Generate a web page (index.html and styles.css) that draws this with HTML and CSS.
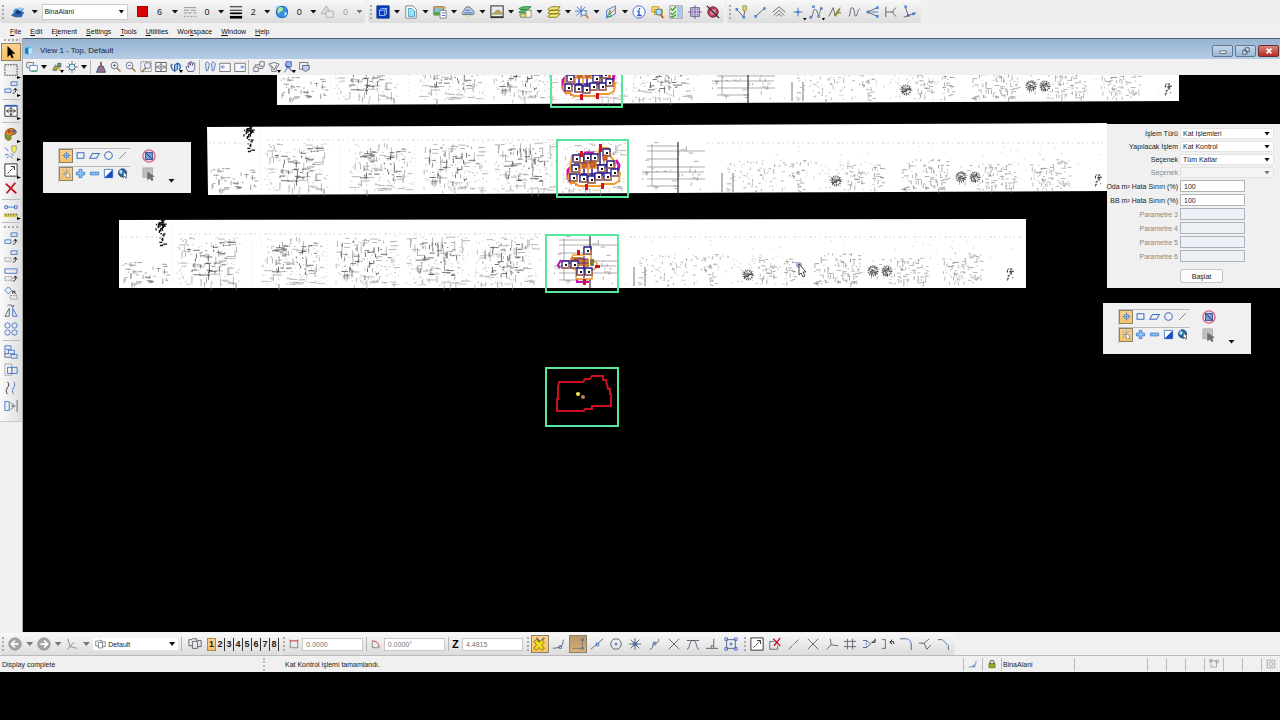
FILE: index.html
```
<!DOCTYPE html>
<html lang="tr">
<head>
    <meta charset="UTF-8">
    <title>View 1 - Top, Default</title>
    <link rel="stylesheet" href="styles.css">
</head>
<body>
    <!-- icon sprite -->
    <svg class="sprite" xmlns="http://www.w3.org/2000/svg">
        <symbol id="layers" viewBox="0 0 16 16"><path d="M0 12l4-4h11l-3 6H5z" fill="#2a62b0"/><path d="M2 7l3-3h10l-3 5H4z" fill="#4a94dc"/><path d="M5 9c0-4 6-5 7-1l-2 2H6z" fill="#163c70"/><path d="M7 4l4-2 3 3-4 2z" fill="#8fd0f0"/></symbol>
        <symbol id="linestyle" viewBox="0 0 16 16"><path class="g" d="M1 3h14M1 6h6m2 0h6M1 9h4m1 0h4m2 0h3M1 13h2m2 0h2m2 0h2m2 0h2"/></symbol>
        <symbol id="weight" viewBox="0 0 16 16"><path d="M1 2h14M1 6h14" stroke="#000"/><path d="M1 9.5h14" stroke="#000" stroke-width="2"/><path d="M1 14h14" stroke="#000" stroke-width="3"/></symbol>
        <symbol id="globe" viewBox="0 0 16 16"><path d="M1 1h13v14H1z" fill="#a9d3f6"/><circle cx="8" cy="8" r="6.5" fill="#3a8fe0" stroke="#1858a8"/><path d="M4 3c3-2 6 0 5 3-2 2-4 1-4 4C3 9 2 6 4 3z" fill="#a8e8a0"/><path d="M11 8l3 1-3 4z" fill="#e0f0ff"/></symbol>
        <symbol id="priority" viewBox="0 0 16 16"><path d="M6 1l6 9H0z" fill="#ddd" stroke="#aaa"/><path d="M6 7h8v7H6z" fill="#e8e8e8" stroke="#aaa"/></symbol>
        <symbol id="cube" viewBox="0 0 16 16"><path d="M1 1h14v14H1z" fill="#0d3db8" stroke="#0a2c88"/><path d="M4 6h6v6H4zM4 6l2-2h6v6l-2 2M10 6l2-2" stroke="#a8ccff"/></symbol>
        <symbol id="doc" viewBox="0 0 16 16"><path d="M2 1h8l4 4v10H2z" fill="#fff" stroke="#777"/><path d="M5 4h4l3 3v6H5z" fill="#9be4f4" stroke="#3a9ab8"/></symbol>
        <symbol id="picture" viewBox="0 0 16 16"><path d="M1 2h11v9H1z" fill="#7dc8e8" stroke="#557"/><path d="M1 8h6v4H1z" fill="#58a048"/><path d="M8 6h7v9H8z" fill="#fff" stroke="#777"/><path d="M1 2h14v2H1z" fill="#d8a050"/><path d="M10 9h4m-4 3h4" class="b"/></symbol>
        <symbol id="cloud" viewBox="0 0 16 16"><path d="M2 11c-2-2 1-4 2-6 1-4 7-4 8 0 3 1 4 4 2 6z" fill="#b8cbe0" stroke="#567"/><path d="M5 6h5m-6 3h9" class="b"/><path d="M4 12h8l-2 2H6z" fill="#d8e0a8"/></symbol>
        <symbol id="terrain" viewBox="0 0 16 16"><path d="M1 1h14v13H1z" fill="#e8f0f4" stroke="#555" stroke-width="1.500"/><path d="M2 9c4 0 4-4 7-4s3 3 5 4v2H2z" fill="#b0a860"/><path d="M1 14h14" stroke="#333" stroke-width="2"/></symbol>
        <symbol id="models" viewBox="0 0 16 16"><path d="M1 4l5-2h9l-4 3H2zM1 8l4-2h9l-4 3H2z" fill="#56c870" stroke="#287840"/><path d="M2 11l3-1h8l-4 4H3z" fill="#e8e060" stroke="#777"/><path d="M9 6h6v8H9z" fill="#fffbe0" stroke="#886"/></symbol>
        <symbol id="stack" viewBox="0 0 16 16"><path d="M1 13l4-3h10l-4 4H2zM1 9l4-3h10l-4 4H2zM1 5l4-3h10l-4 4H2z" fill="#f4ec70" stroke="#777018"/></symbol>
        <symbol id="burst" viewBox="0 0 16 16"><path class="b" d="M7 1v13M0 7h14M2 2l10 10M12 2L2 12"/><circle cx="10" cy="9" r="3" fill="#d8ecff" stroke="#57a"/><path d="M12 11l3 4" stroke="#d08038" stroke-width="2"/></symbol>
        <symbol id="plane" viewBox="0 0 16 16"><path class="b" d="M3 6l10-5v9L3 15z"/><path d="M4 13l3-7v6M3 13h6" stroke="#2c9a48"/><path d="M6 11l7-7" stroke="#cc4050"/></symbol>
        <symbol id="info" viewBox="0 0 16 16"><circle cx="8" cy="8" r="7" fill="#f4f8ff" stroke="#4268c8"/><path d="M8.500 3.500v2M6 7h2v5m-2 0h5" stroke="#2850c0" stroke-width="1.500"/></symbol>
        <symbol id="search" viewBox="0 0 16 16"><path d="M1 2h8v6H1zM4 5h9v6H4z" fill="#ffe070" stroke="#c09020"/><circle cx="9" cy="8" r="3.500" fill="#b0e0f8" stroke="#3870b0"/><path d="M11 11l3 4" stroke="#c05818" stroke-width="2"/></symbol>
        <symbol id="checks" viewBox="0 0 16 16"><path d="M1 1h14v14H1z" fill="#f0f4e0" stroke="#889"/><path d="M9 2h5v12H9z" fill="#a0c8f0"/><path d="M2 4l2 2 4-4M2 9l2 2 4-4M2 13l2 1 4-3" stroke="#3a9a30" stroke-width="1.500"/></symbol>
        <symbol id="crossgrid" viewBox="0 0 16 16"><path d="M3 3h10v10H3z" fill="#e0d8f0" stroke="#557"/><path d="M8 0v16M0 8h16" stroke="#8040a0"/><path d="M3 5h10M3 11h10M5 3v10M11 3v10" stroke="#99b"/></symbol>
        <symbol id="blocked" viewBox="0 0 16 16"><circle cx="8" cy="8" r="6" fill="#b84060" stroke="#702038"/><path d="M5 5h6v6H5z" fill="#d890a0"/><path d="M1 1l14 14" stroke="#222" stroke-width="1.500"/></symbol>
        <symbol id="smartline" viewBox="0 0 16 16"><path class="k" d="M2 5l8 9 1-7"/><path class="b" d="M1 4h2v2H1zM9 13h2v2H9z"/><path d="M9 1h4v4l-1 2h-2L9 5z" fill="#e8e040" stroke="#886"/></symbol>
        <symbol id="line" viewBox="0 0 16 16"><path class="k" d="M3 13L13 4"/><path class="b" d="M2 12h2v2H2zM12 3h2v2h-2z"/></symbol>
        <symbol id="chevrons" viewBox="0 0 16 16"><path class="k" d="M1 8l7-6 7 6M2 12l6-6 6 6M5 13l3-3 3 3"/></symbol>
        <symbol id="point" viewBox="0 0 16 16"><path class="b" d="M8 3v10M3 8h10M7 7h2v2H7z"/></symbol>
        <symbol id="curve1" viewBox="0 0 16 16"><path class="k" d="M2 14c3 0 2-9 5-9s2 6 4 6 1-7 4-7"/><path class="b" d="M1 13h2v2H1zM4 1h2v2H4zM10 12h2v2h-2zM13 3h2v2h-2z"/></symbol>
        <symbol id="curve2" viewBox="0 0 16 16"><path d="M8 13l5-8" stroke="#c8b818" stroke-width="3"/><path class="k" d="M1 13L6 3l2 9 6-9M11 9h4"/></symbol>
        <symbol id="curve3" viewBox="0 0 16 16"><path class="k" d="M2 13C4 13 3 3 6 3s2 10 4 10 2-10 5-8"/></symbol>
        <symbol id="split" viewBox="0 0 16 16"><path class="k" d="M2 8l11-5M2 8l11 5"/><path class="b" d="M1 7h3v2H1zM12 2h2v2h-2zM12 12h2v2h-2zM6 8h8"/></symbol>
        <symbol id="trimline" viewBox="0 0 16 16"><path class="k" d="M2 2v12M2 8h8M14 3c-5 3-5 7 0 10"/></symbol>
        <symbol id="angle" viewBox="0 0 16 16"><path class="k" d="M3 3l3 9 9-3M1 14l5-2"/><path class="b" d="M2 1h2v2H2zM5 11h2v2H5zM11 9h2v2h-2z"/></symbol>
        <symbol id="view" viewBox="0 0 16 16"><path d="M2 3l6-2 6 2v10l-6 2-6-2z" fill="#49b8ee"/><path d="M2 3l6 2v10l-6-2z" fill="#1c78c8"/><path d="M8 5l6-2v10l-6 2z" fill="#bfe6fa"/></symbol>
        <symbol id="windows" viewBox="0 0 16 16"><path class="k" d="M1 2h9v7H1z"/><path d="M5 6h10v7H5z" fill="#fff" class="b"/><path d="M7 14h8" stroke="#38a048"/></symbol>
        <symbol id="attrs" viewBox="0 0 16 16"><path d="M2 12l4-7 3 4-2 4z" fill="#a0a848" stroke="#667"/><path d="M9 3h4v5H9z" fill="#68a868" stroke="#456"/><circle cx="11" cy="11" r="2" fill="#ddc870"/></symbol>
        <symbol id="sun" viewBox="0 0 16 16"><path class="k" d="M8 0v16M0 8h16M3 3l10 10M13 3L3 13"/><circle cx="8" cy="8" r="4" fill="#d4f4f8" stroke="#357"/></symbol>
        <symbol id="broom" viewBox="0 0 16 16"><path d="M7 1h2v6H7z" fill="#a03030"/><path d="M5 7h6l3 8H2z" fill="#7088b8" stroke="#334"/><path d="M7 9v5m3-5v5" stroke="#c04848"/></symbol>
        <symbol id="zoomin" viewBox="0 0 16 16"><circle cx="6" cy="6" r="4.500" fill="#eef" stroke="#556"/><path d="M9 9l5 5" stroke="#a87848" stroke-width="2"/><path class="k" d="M6 4v4M4 6h4"/></symbol>
        <symbol id="zoomout" viewBox="0 0 16 16"><circle cx="6" cy="6" r="4.500" fill="#eef" stroke="#556"/><path d="M9 9l5 5" stroke="#a87848" stroke-width="2"/><path class="k" d="M4 6h4"/></symbol>
        <symbol id="zoomarea" viewBox="0 0 16 16"><path class="k" stroke-dasharray="2 1" d="M1 1h14v13H1z"/><circle cx="10" cy="6" r="4" fill="#eef" stroke="#556"/><path d="M8 9l-6 6" stroke="#a87848" stroke-width="2"/></symbol>
        <symbol id="fit" viewBox="0 0 16 16"><path d="M1 2h14v12H1z" fill="#fff" stroke="#333"/><path class="k" d="M8 4v8M3 8h10M6 6l2-3 2 3M6 10l2 3 2-3M5 6L2 8l3 2M11 6l3 2-3 2"/></symbol>
        <symbol id="rotate" viewBox="0 0 16 16"><path d="M3 4C0 8 3 13 7 13M3 4L1 7M9 3c5 0 6 6 3 9" stroke="#2878c8" stroke-width="2"/><path d="M6 5l4-2v8l-4 3z" fill="#80c0f0" stroke="#236"/></symbol>
        <symbol id="hand" viewBox="0 0 16 16"><path d="M4 14L1 8l2-1 2 2-1-6 2-1 1 4V1h2l1 5 1-4 2 1v7l-2 4z" fill="#eef0ff" stroke="#446"/></symbol>
        <symbol id="walk" viewBox="0 0 16 16"><path d="M2 3c2-3 5-1 5 2L5 13H3zM10 3c2-3 5-1 5 2l-2 8h-2z" fill="#dce8ff" stroke="#3858a8"/></symbol>
        <symbol id="prev" viewBox="0 0 16 16"><path d="M1 3h14v11H1z" fill="#f8f8ff" stroke="#555"/><path class="b" d="M3 8h5M3 8l3-2M3 8l3 2"/></symbol>
        <symbol id="next" viewBox="0 0 16 16"><path d="M1 3h14v11H1z" fill="#f8f8ff" stroke="#555"/><path class="b" d="M8 8h5l-3-2m3 2l-3 2"/></symbol>
        <symbol id="copyview" viewBox="0 0 16 16"><path class="k" d="M9 1h6v6H9zM1 8h6v6H1zM8 10h5V8M3 8V5h6"/></symbol>
        <symbol id="clip" viewBox="0 0 16 16"><path class="k" d="M1 4l7-2 7 2-4 6v4H5v-4zM4 5l4 7 4-7"/></symbol>
        <symbol id="clipmask" viewBox="0 0 16 16"><path d="M4 1h7v7H4z" fill="#9eb8f0" stroke="#24489c"/><path d="M2 15l5-8 2 4 5 4M2 4l11 10" stroke="#24489c"/></symbol>
        <symbol id="display" viewBox="0 0 16 16"><path class="k" d="M2 2h11v9H2z"/><path d="M6 6h9v5l-5 3-4-3z" fill="#c6cde8" stroke="#446"/></symbol>
        <symbol id="arrow" viewBox="0 0 16 16"><path d="M4 1v13l3-3 2 4 2-1-2-4h4z" fill="#000"/></symbol>
        <symbol id="fence" viewBox="0 0 16 16"><path stroke="#333" stroke-dasharray="2 1" d="M1 2h14v12H1z"/></symbol>
        <symbol id="manip" viewBox="0 0 16 16"><path class="b" d="M8 1h7v4H8zM1 9h7v4H1z"/><path d="M10 14c3 0 4-2 3-5m-2 2l2-3 2 3" stroke="#222"/></symbol>
        <symbol id="fitbox" viewBox="0 0 16 16"><path d="M1 2h14v12H1z" fill="#fff" stroke="#222"/><path d="M1 2h14" stroke="#2868b8" stroke-width="2"/><path d="M8 4v9M3 8h10M6 6l2-2 2 2M6 11l2 2 2-2M5 6L3 8l2 2M11 6l2 2-2 2" stroke="#222"/></symbol>
        <symbol id="palette" viewBox="0 0 16 16"><path d="M3 4c4-4 11-2 11 2 0 3-5 2-6 4s2 5-3 5C1 15 0 8 3 4z" fill="#d88420" stroke="#704010"/><circle cx="6" cy="5" r="1.500" fill="#c03020"/><circle cx="11" cy="5" r="1.500" fill="#3060c0"/><path d="M2 9h5v5H3z" fill="#5aa838"/></symbol>
        <symbol id="tips" viewBox="0 0 16 16"><path class="b" d="M1 3l4 4M7 13l3 2M1 11h4M8 10l3 2M3 15l3-3"/><path d="M9 1h5v5l-2 3h-1L9 6z" fill="#f8ec60" stroke="#997"/></symbol>
        <symbol id="scale" viewBox="0 0 16 16"><path d="M1 1h14v14H1z" fill="#fff" stroke="#222"/><path stroke="#222" stroke-dasharray="3 1" d="M4 12l7-7"/><path d="M8 4h4v4" stroke="#222"/></symbol>
        <symbol id="delete" viewBox="0 0 16 16"><path d="M2 3l12 11M13 2L3 14" stroke="#c41020" stroke-width="2"/></symbol>
        <symbol id="measure" viewBox="0 0 16 16"><path class="b" d="M1 2h3v3H1zM12 2h3v3h-3zM4 3.500h8"/><path d="M0 11h16v4H0z" fill="#d4cc50"/><path d="M2 11v2m3-2v2m3-2v2m3-2v2m3-2v2" stroke="#555"/></symbol>
        <symbol id="move" viewBox="0 0 16 16"><path class="b" d="M8 1h7v4H8z"/><path class="g" stroke-dasharray="2 1" d="M1 9h7v4H1z"/><path d="M10 14c3 0 4-2 3-5m-2 2l2-3 2 3" stroke="#222"/></symbol>
        <symbol id="scale2" viewBox="0 0 16 16"><path class="b" d="M1 1h14v5H1z"/><path class="g" stroke-dasharray="2 1" d="M1 10h8v4H1z"/><path d="M10 15c3 0 4-2 3-5m-2 2l2-3 2 3" stroke="#222"/></symbol>
        <symbol id="rotate2" viewBox="0 0 16 16"><path class="b" d="M1 5l4-4 4 4-4 4z"/><path class="g" stroke-dasharray="2 1" d="M7 11h8v4H7z"/><path d="M14 9l-4-3M10 9V6h3" stroke="#222"/></symbol>
        <symbol id="mirror" viewBox="0 0 16 16"><path class="k" d="M6 5v9H1zM4 2c3-2 5-1 6 1m-2 0h3V1"/><path class="b" d="M10 5v9h5z"/></symbol>
        <symbol id="array" viewBox="0 0 16 16"><g class="b"><circle cx="4" cy="4" r="3"/><circle cx="12" cy="4" r="3"/><circle cx="4" cy="12" r="3"/><circle cx="12" cy="12" r="3"/></g></symbol>
        <symbol id="align" viewBox="0 0 16 16"><path class="b" d="M1 1h7v4H1zM5 6h7v4H5zM8 11h7v4H8z"/><path class="k" d="M1 6v8M1 10h4M1 14h6"/></symbol>
        <symbol id="stretch" viewBox="0 0 16 16"><path class="g" stroke-dasharray="2 1" d="M1 1h8v13H1z"/><path class="b" d="M4 5h11v7H4zM9 5v7"/></symbol>
        <symbol id="waves" viewBox="0 0 16 16"><path d="M4 1c5 5-5 8 0 14" stroke="#222"/><path class="b" d="M11 1c5 5-5 8 0 14"/></symbol>
        <symbol id="mirror2" viewBox="0 0 16 16"><path class="b" d="M1 3h5v10H1z"/><path class="k" d="M15 1v14M8 4l4 4-4 4M8 8h5"/></symbol>
        <symbol id="target" viewBox="0 0 16 16"><path d="M8 2v12M2 8h12" stroke="#4878c0"/><circle cx="8" cy="8" r="3.500" fill="#a8ccf0" stroke="#3868b0"/><path d="M7 7h2v2H7z" fill="#1848a0"/></symbol>
        <symbol id="block" viewBox="0 0 16 16"><path class="b thick" d="M3 4h10v8H3z"/></symbol>
        <symbol id="shape" viewBox="0 0 16 16"><path class="b thick" d="M5 5h10l-4 7H1z"/></symbol>
        <symbol id="circle" viewBox="0 0 16 16"><circle class="b thick" cx="8" cy="8" r="5.500"/></symbol>
        <symbol id="diag" viewBox="0 0 16 16"><path class="k" d="M3 13L13 3"/></symbol>
        <symbol id="wand" viewBox="0 0 16 16"><path d="M2 2l12 12M8 1v5M1 8h5M13 2L9 6M2 13l5-5" stroke="#8090a0"/><path d="M7 7l5 2v5H8z" fill="#fff" stroke="#778"/></symbol>
        <symbol id="plus" viewBox="0 0 16 16"><path d="M6 2h4v4h4v4h-4v4H6v-4H2V6h4z" fill="#8cc4f4" stroke="#1f68c8"/></symbol>
        <symbol id="minus" viewBox="0 0 16 16"><path d="M2 6h12v4H2z" fill="#8cc4f4" stroke="#1f68c8"/></symbol>
        <symbol id="invert" viewBox="0 0 16 16"><path d="M2 2h12v12H2z" fill="#fff" stroke="#1450a8"/><path d="M14 2v12H2z" fill="#1450c0"/></symbol>
        <symbol id="world" viewBox="0 0 16 16"><circle cx="8" cy="7" r="6" fill="#2868a8" stroke="#184068"/><path d="M5 2l4 3-3 4-3-3z" fill="#a8e0f0"/><path d="M9 5v9l2-2 2 3 1-5z" fill="#fff" stroke="#234"/></symbol>
        <symbol id="noselect" viewBox="0 0 16 16"><circle cx="8" cy="8" r="7" fill="#e4e0f0" stroke="#dc6878" stroke-width="1.500"/><path d="M4 4h8v8H4z" fill="#7898d0" stroke="#34509c"/><path d="M4 4l8 8" stroke="#24386c"/></symbol>
        <symbol id="pick" viewBox="0 0 16 16"><path d="M1 1h11v11H1z" fill="#c0c0c0" stroke="#aaa"/><path d="M6 5v10l3-2 2 3 2-1-1-4h3z" fill="#707070"/></symbol>
        <symbol id="back" viewBox="0 0 16 16"><circle cx="8" cy="8" r="7" fill="#a4a4a4" stroke="#888"/><path d="M12 8H5m3-4L4 8l4 4" stroke="#fff" stroke-width="2"/></symbol>
        <symbol id="forward" viewBox="0 0 16 16"><circle cx="8" cy="8" r="7" fill="#a4a4a4" stroke="#888"/><path d="M4 8h7M8 4l4 4-4 4" stroke="#fff" stroke-width="2"/></symbol>
        <symbol id="acs" viewBox="0 0 16 16"><path class="g" d="M3 2l3 9 8 2M6 11l-4 3M6 11l4-5"/></symbol>
        <symbol id="viewgroup" viewBox="0 0 16 16"><path class="k" d="M5 3H1v7h4M5 2h5v3M5 5h6v8H5zM11 4h4v7h-4"/></symbol>
        <symbol id="distance" viewBox="0 0 16 16"><path class="k" d="M2 5v9h12V5"/><path d="M2 3h12M2 1v4m12-4v4" stroke="#c03030" stroke-width="1.500"/></symbol>
        <symbol id="degree" viewBox="0 0 16 16"><path class="k" d="M2 3v11h12"/><path d="M2 3c7 0 10 4 11 10" stroke="#c03030" stroke-width="1.500"/></symbol>
        <symbol id="snapoff" viewBox="0 0 16 16"><path d="M8 6l5-5M8 6L4 1" stroke="#777" stroke-width="2"/><path d="M1 5l3-2 3 3 3-3 3 3-3 3 3 4-3 2-3-3-3 3-3-2 3-4z" fill="#f0dc18" stroke="#806c10"/></symbol>
        <symbol id="snapnear" viewBox="0 0 16 16"><path class="k" d="M1 13l7-1 4-3 1-6"/><path class="b" d="M8 10h3v3H8z"/></symbol>
        <symbol id="snapkey" viewBox="0 0 16 16"><path class="k" stroke-dasharray="2 1" d="M2 13h11V3"/><path class="b" d="M12 2h2v2h-2zM12 12h2v2h-2z"/></symbol>
        <symbol id="snapmid" viewBox="0 0 16 16"><path class="k" d="M1 14L15 2"/><path class="b" d="M7 7h3v3H7z"/></symbol>
        <symbol id="snapcenter" viewBox="0 0 16 16"><circle class="k" cx="8" cy="8" r="6"/><path class="b" d="M7 7h2v2H7z"/></symbol>
        <symbol id="snaporigin" viewBox="0 0 16 16"><path class="k" d="M8 1v14M1 8h14M3 3l10 10M13 3L3 13"/><path class="b" d="M6 6h4v4H6z"/></symbol>
        <symbol id="snapbisect" viewBox="0 0 16 16"><path class="k" d="M2 14c6-1 1-6 6-7s4-2 4-5"/><path class="b" d="M6 6h3v3H6z"/></symbol>
        <symbol id="cross" viewBox="0 0 16 16"><path class="k" d="M2 2l12 12M14 2L2 14"/></symbol>
        <symbol id="snaptan" viewBox="0 0 16 16"><path class="k" d="M1 4h14M1 14c4 0 2-10 7-10s3 10 7 10"/></symbol>
        <symbol id="snapperp" viewBox="0 0 16 16"><path class="k" d="M1 13h14M10 13V2M7 13v-3h3"/></symbol>
        <symbol id="snapbox" viewBox="0 0 16 16"><path class="k" d="M3 3h10v10H3z"/><path class="b" d="M1 1h3v3H1zM12 1h3v3h-3zM1 12h3v3H1zM12 12h3v3h-3zM7 7h2v2H7z"/></symbol>
        <symbol id="delpart" viewBox="0 0 16 16"><path class="k" d="M7 5H2v9h9v-4"/><path d="M6 2l8 8M14 1L7 10" stroke="#c41020" stroke-width="1.500"/></symbol>
        <symbol id="extend" viewBox="0 0 16 16"><path class="k" stroke-dasharray="6 1 1 1" d="M2 14L14 2"/></symbol>
        <symbol id="extend2" viewBox="0 0 16 16"><path class="k" d="M2 14l5-5L6 2M7 9l8 1"/></symbol>
        <symbol id="hash" viewBox="0 0 16 16"><path class="k" d="M5 2v12M11 2v12M1 5h14M1 11h14"/></symbol>
        <symbol id="trim" viewBox="0 0 16 16"><path class="k" d="M1 4h4l5 4-5 4H1"/><path class="b" stroke-dasharray="2 1" d="M5 4v8"/><path d="M15 2v4h-4m4-3l-4 4" stroke="#222"/></symbol>
        <symbol id="trim2" viewBox="0 0 16 16"><path class="k" d="M1 3h4v10H1"/><path d="M10 6l4-1 1 3M10 6l3-3M10 6l3 2" stroke="#222"/></symbol>
        <symbol id="fillet" viewBox="0 0 16 16"><path class="k" d="M1 2h6M14 8v7"/><path class="b" d="M7 2c4 0 7 2 7 7"/></symbol>
        <symbol id="chamfer" viewBox="0 0 16 16"><path class="k" d="M1 7h6l6-5M7 7l3 7M10 14l5-5"/></symbol>
        <symbol id="chamfer2" viewBox="0 0 16 16"><path class="k" d="M1 3h5M13 10v5"/><path class="b" d="M6 3l7 7"/></symbol>
        <symbol id="lock" viewBox="0 0 16 16"><path d="M5 8V5c0-4 6-4 6 0v3" stroke="#777" stroke-width="2"/><path d="M3 7h10v7H3z" fill="#98a820" stroke="#5c6810"/></symbol>
        <symbol id="frame" viewBox="0 0 16 16"><path class="g" d="M3 3h9v10H3zM1 1h4v3H1zM11 2h4v4h-4z"/></symbol>
        <symbol id="at" viewBox="0 0 16 16"><path class="g" d="M2 2h12v12H2z"/><circle class="g" cx="8" cy="8" r="3"/></symbol>
    </svg>

    <header class="toolbars">
        <div class="bar attributes">
            <span class="grip"></span>
            <button class="tool" aria-label="Level"><svg><use href="#layers"/></svg></button>
            <span class="drop"></span>
            <span class="select level"><select aria-label="Active level"><option>BinaAlani</option></select></span>
            <button class="attr"><i class="swatch"></i><span>6</span><i class="drop"></i></button>
            <button class="attr"><svg><use href="#linestyle"/></svg><span>0</span><i class="drop"></i></button>
            <button class="attr"><svg><use href="#weight"/></svg><span>2</span><i class="drop"></i></button>
            <button class="attr"><svg><use href="#globe"/></svg><span>0</span><i class="drop"></i></button>
            <button class="attr" disabled><svg><use href="#priority"/></svg><span>0</span><i class="drop"></i></button>
        </div>
        <div class="bar primary">
            <span class="grip"></span>
            <button class="pair"><svg><use href="#cube"/></svg><i class="drop"></i></button>
            <button class="pair"><svg><use href="#doc"/></svg><i class="drop"></i></button>
            <button class="pair"><svg><use href="#picture"/></svg><i class="drop"></i></button>
            <button class="pair"><svg><use href="#cloud"/></svg><i class="drop"></i></button>
            <button class="pair"><svg><use href="#terrain"/></svg><i class="drop"></i></button>
            <button class="pair"><svg><use href="#models"/></svg><i class="drop"></i></button>
            <button class="pair"><svg><use href="#stack"/></svg><i class="drop"></i></button>
            <button class="pair"><svg><use href="#burst"/></svg><i class="drop"></i></button>
            <button class="pair"><svg><use href="#plane"/></svg><i class="drop"></i></button>
            <button class="tool"><svg><use href="#info"/></svg></button>
            <button class="tool"><svg><use href="#search"/></svg></button>
            <button class="tool"><svg><use href="#checks"/></svg></button>
            <button class="tool"><svg><use href="#crossgrid"/></svg></button>
            <button class="tool"><svg><use href="#blocked"/></svg></button>
        </div>
        <div class="bar linear">
            <span class="grip"></span>
            <button class="tool"><svg><use href="#smartline"/></svg></button>
            <button class="tool"><svg><use href="#line"/></svg></button>
            <button class="tool"><svg><use href="#chevrons"/></svg></button>
            <button class="tool more"><svg><use href="#point"/></svg></button>
            <button class="tool more"><svg><use href="#curve1"/></svg></button>
            <button class="tool"><svg><use href="#curve2"/></svg></button>
            <button class="tool"><svg><use href="#curve3"/></svg></button>
            <button class="tool"><svg><use href="#split"/></svg></button>
            <button class="tool"><svg><use href="#trimline"/></svg></button>
            <button class="tool"><svg><use href="#angle"/></svg></button>
        </div>
    </header>

    <nav class="menu">
        <a href="#"><u>F</u>ile</a>
        <a href="#"><u>E</u>dit</a>
        <a href="#">E<u>l</u>ement</a>
        <a href="#"><u>S</u>ettings</a>
        <a href="#"><u>T</u>ools</a>
        <a href="#"><u>U</u>tilities</a>
        <a href="#">Wor<u>k</u>space</a>
        <a href="#"><u>W</u>indow</a>
        <a href="#"><u>H</u>elp</a>
    </nav>

    <div class="workspace">
        <aside class="side">
            <div class="side-tools">
                <span class="grip-h"></span>
                <button class="active"><svg><use href="#arrow"/></svg></button>
                <button class="more"><svg><use href="#fence"/></svg></button>
                <button class="more"><svg><use href="#manip"/></svg></button>
                <hr>
                <button class="more"><svg><use href="#fitbox"/></svg></button>
                <hr>
                <button class="more"><svg><use href="#palette"/></svg></button>
                <button class="more"><svg><use href="#tips"/></svg></button>
                <button class="more"><svg><use href="#scale"/></svg></button>
                <button><svg><use href="#delete"/></svg></button>
                <hr>
                <button class="more"><svg><use href="#measure"/></svg></button>
                <hr>
                <span class="grip-h"></span>
                <button><svg><use href="#manip"/></svg></button>
                <button><svg><use href="#move"/></svg></button>
                <button><svg><use href="#scale2"/></svg></button>
                <button><svg><use href="#rotate2"/></svg></button>
                <button><svg><use href="#mirror"/></svg></button>
                <button><svg><use href="#array"/></svg></button>
                <hr>
                <button><svg><use href="#align"/></svg></button>
                <button><svg><use href="#stretch"/></svg></button>
                <button><svg><use href="#waves"/></svg></button>
                <button><svg><use href="#mirror2"/></svg></button>
            </div>
        </aside>

        <main class="view">
            <div class="title">
                <svg><use href="#view"/></svg>
                <h1>View 1 - Top, Default</h1>
                <div class="window-buttons">
                    <button aria-label="Minimize"><svg viewBox="0 0 16 10"><path d="M4 5h8v3H4z" fill="#fff" stroke="#456"/></svg></button>
                    <button aria-label="Restore"><svg viewBox="0 0 16 10"><path d="M7 1h5v5H7zM4 4h5v5H4z" fill="#d8e6f4" stroke="#345"/></svg></button>
                    <button class="close" aria-label="Close"><svg viewBox="0 0 16 10"><path d="M5 2l6 6M11 2L5 8" stroke="#fff" stroke-width="2"/></svg></button>
                </div>
            </div>
            <div class="view-tools">
                <button><svg><use href="#windows"/></svg></button>
                <i class="drop"></i>
                <button class="more"><svg><use href="#attrs"/></svg></button>
                <button><svg><use href="#sun"/></svg></button>
                <i class="drop"></i>
                <i class="sep"></i>
                <button><svg><use href="#broom"/></svg></button>
                <button><svg><use href="#zoomin"/></svg></button>
                <button><svg><use href="#zoomout"/></svg></button>
                <button><svg><use href="#zoomarea"/></svg></button>
                <button><svg><use href="#fit"/></svg></button>
                <button class="more"><svg><use href="#rotate"/></svg></button>
                <button><svg><use href="#hand"/></svg></button>
                <i class="sep"></i>
                <button><svg><use href="#walk"/></svg></button>
                <button><svg><use href="#prev"/></svg></button>
                <button><svg><use href="#next"/></svg></button>
                <i class="sep"></i>
                <button><svg><use href="#copyview"/></svg></button>
                <button class="more"><svg><use href="#clip"/></svg></button>
                <button class="more"><svg><use href="#clipmask"/></svg></button>
                <button><svg><use href="#display"/></svg></button>
            </div>

            <div class="canvas">
                <svg id="drawing"></svg>

                <section class="palette palette-left">
                    <div class="modes">
                        <button class="active"><svg><use href="#target"/></svg></button>
                        <button><svg><use href="#block"/></svg></button>
                        <button><svg><use href="#shape"/></svg></button>
                        <button><svg><use href="#circle"/></svg></button>
                        <button><svg><use href="#diag"/></svg></button>
                    </div>
                    <button class="big"><svg><use href="#noselect"/></svg></button>
                    <div class="modes">
                        <button class="active"><svg><use href="#wand"/></svg></button>
                        <button><svg><use href="#plus"/></svg></button>
                        <button><svg><use href="#minus"/></svg></button>
                        <button><svg><use href="#invert"/></svg></button>
                        <button><svg><use href="#world"/></svg></button>
                    </div>
                    <button class="big"><svg><use href="#pick"/></svg></button>
                    <i class="drop"></i>
                </section>

                <form class="dialog">
                    <label for="tur">İşlem Türü</label>
                    <span class="select"><select id="tur"><option>Kat İşlemleri</option></select></span>
                    <label for="islem">Yapılacak İşlem</label>
                    <span class="select"><select id="islem"><option>Kat Kontrol</option></select></span>
                    <label for="sec1">Seçenek</label>
                    <span class="select"><select id="sec1"><option>Tüm Katlar</option></select></span>
                    <label for="sec2" class="off">Seçenek</label>
                    <span class="select off"><select id="sec2" disabled></select></span>
                    <label for="oda">Oda m² Hata Sınırı (%)</label>
                    <input id="oda" value="100">
                    <label for="bb">BB m² Hata Sınırı (%)</label>
                    <input id="bb" value="100">
                    <label for="p3" class="off">Parametre 3</label>
                    <input id="p3" disabled>
                    <label for="p4" class="off">Parametre 4</label>
                    <input id="p4" disabled>
                    <label for="p5" class="off">Parametre 5</label>
                    <input id="p5" disabled>
                    <label for="p6" class="off">Parametre 6</label>
                    <input id="p6" disabled>
                    <button type="button">Başlat</button>
                </form>

                <section class="palette palette-right">
                    <div class="modes">
                        <button class="active"><svg><use href="#target"/></svg></button>
                        <button><svg><use href="#block"/></svg></button>
                        <button><svg><use href="#shape"/></svg></button>
                        <button><svg><use href="#circle"/></svg></button>
                        <button><svg><use href="#diag"/></svg></button>
                    </div>
                    <button class="big"><svg><use href="#noselect"/></svg></button>
                    <div class="modes">
                        <button class="active"><svg><use href="#wand"/></svg></button>
                        <button><svg><use href="#plus"/></svg></button>
                        <button><svg><use href="#minus"/></svg></button>
                        <button><svg><use href="#invert"/></svg></button>
                        <button><svg><use href="#world"/></svg></button>
                    </div>
                    <button class="big"><svg><use href="#pick"/></svg></button>
                    <i class="drop"></i>
                </section>
            </div>
        </main>
    </div>

    <footer>
        <div class="bottom">
            <div class="bar views">
                <span class="grip"></span>
                <button class="pair" disabled><svg><use href="#back"/></svg><i class="drop"></i></button>
                <button class="pair" disabled><svg><use href="#forward"/></svg><i class="drop"></i></button>
                <button class="pair" disabled><svg><use href="#acs"/></svg><i class="drop"></i></button>
                <span class="select group-select"><svg><use href="#viewgroup"/></svg><select aria-label="View group"><option>Default</option></select></span>
                <i class="sep"></i>
                <button class="tool"><svg><use href="#viewgroup"/></svg></button>
                <div class="numbers">
                    <button class="active">1</button><button>2</button><button>3</button><button>4</button><button>5</button><button>6</button><button>7</button><button>8</button>
                </div>
            </div>
            <div class="bar accudraw">
                <span class="grip"></span>
                <label for="dist" aria-label="Distance"><svg><use href="#distance"/></svg></label>
                <input id="dist" value="0.0000">
                <i class="sep"></i>
                <label for="deg" aria-label="Angle"><svg><use href="#degree"/></svg></label>
                <input id="deg" value="0.0000°">
                <i class="sep"></i>
                <label for="z">Z</label>
                <input id="z" value="4.4815">
            </div>
            <div class="bar snaps">
                <span class="grip"></span>
                <button class="tool active"><svg><use href="#snapoff"/></svg></button>
                <button class="tool"><svg><use href="#snapnear"/></svg></button>
                <button class="tool active dark"><svg><use href="#snapkey"/></svg></button>
                <button class="tool"><svg><use href="#snapmid"/></svg></button>
                <button class="tool"><svg><use href="#snapcenter"/></svg></button>
                <button class="tool"><svg><use href="#snaporigin"/></svg></button>
                <button class="tool"><svg><use href="#snapbisect"/></svg></button>
                <button class="tool"><svg><use href="#cross"/></svg></button>
                <button class="tool"><svg><use href="#snaptan"/></svg></button>
                <button class="tool"><svg><use href="#snapperp"/></svg></button>
                <button class="tool"><svg><use href="#snapbox"/></svg></button>
            </div>
            <div class="bar modify">
                <span class="grip"></span>
                <button class="tool"><svg><use href="#scale"/></svg></button>
                <button class="tool"><svg><use href="#delpart"/></svg></button>
                <button class="tool"><svg><use href="#extend"/></svg></button>
                <button class="tool"><svg><use href="#cross"/></svg></button>
                <button class="tool"><svg><use href="#extend2"/></svg></button>
                <button class="tool"><svg><use href="#hash"/></svg></button>
                <button class="tool"><svg><use href="#trim"/></svg></button>
                <button class="tool"><svg><use href="#trim2"/></svg></button>
                <button class="tool"><svg><use href="#fillet"/></svg></button>
                <button class="tool"><svg><use href="#chamfer"/></svg></button>
                <button class="tool"><svg><use href="#chamfer2"/></svg></button>
            </div>
        </div>
        <div class="status">
            <span class="state">Display complete</span>
            <span class="message">Kat Kontrol işlemi tamamlandı.</span>
            <span class="cell"><svg><use href="#snapnear"/></svg></span>
            <span class="cell"><svg><use href="#lock"/></svg></span>
            <span class="cell wide">BinaAlani</span>
            <span class="cell wide"></span>
            <span class="cell"></span>
            <span class="cell"></span>
            <span class="cell"></span>
            <span class="cell"><svg><use href="#frame"/></svg></span>
            <span class="cell"></span>
            <span class="cell"></span>
            <span class="cell"><svg><use href="#at"/></svg></span>
        </div>
    </footer>

    <script src="script.js"></script>
</body>
</html>
```
FILE: styles.css
```
* {
    margin: 0;
    padding: 0;
    box-sizing: border-box;
}

body {
    min-height: 100vh;
    display: flex;
    flex-direction: column;
    padding-bottom: 48px;
    background: #000;
    color: #222;
    font-family: 'Liberation Sans', Arial, sans-serif;
    font-size: 7px;
    overflow: hidden;
}

button,
input,
select {
    font: inherit;
    color: inherit;
    border: none;
    background: none;
    border-radius: 0;
}

svg {
    display: block;
    width: 14px;
    height: 14px;
    fill: none;
    flex: none;
}

.sprite {
    position: absolute;
    width: 0;
    height: 0;
}

.b { stroke: #3a70c8; }
.k { stroke: #555c68; }
.g { stroke: #888; }
.thick { stroke-width: 1.5; }

/* shared bits */
.drop {
    flex: none;
    width: 7px;
    height: 4px;
    background: #111;
    clip-path: polygon(0 0, 100% 0, 50% 100%);
}

:disabled .drop {
    background: #777;
}

.sep {
    flex: none;
    width: 1px;
    height: 14px;
    background: #b4b4b4;
}

.grip {
    flex: none;
    width: 3px;
    height: 14px;
    border-left: 2px dotted #aaa;
}

.select {
    position: relative;
    display: flex;
    align-items: center;
    background: #fff;
}

.select select {
    appearance: none;
    width: 100%;
    height: 100%;
    padding: 0 2px;
    outline: none;
}

.select::after {
    content: "";
    position: absolute;
    right: 3px;
    width: 6px;
    height: 4px;
    background: #111;
    clip-path: polygon(0 0, 100% 0, 50% 100%);
}

.more {
    position: relative;
}

.more::after {
    content: "";
    position: absolute;
    right: 0;
    bottom: 0;
    width: 4px;
    height: 3px;
    background: #000;
    clip-path: polygon(0 0, 100% 0, 50% 100%);
}

.active {
    background: linear-gradient(#fbd08c, #f6c264);
    border: 1px solid #8c8468;
}

/* top toolbars */
.toolbars {
    display: flex;
    gap: 3px;
    height: 24px;
    padding-bottom: 1px;
    background: #efefef;
}

.bar {
    display: flex;
    align-items: center;
    justify-content: space-between;
    background: linear-gradient(#f8f8f8, #dcdcdc);
    border-radius: 0 0 3px 3px;
    padding: 0 2px;
}

.attributes { width: 365px; }
.primary { width: 356px; }
.linear { width: 194px; }

.tool {
    display: flex;
    align-items: center;
    justify-content: center;
    width: 18px;
    height: 18px;
}

.level {
    width: 86px;
    height: 16px;
    border: 1px solid #ccc;
    margin-right: 4px;
}

.level select {
    padding: 0 1px;
}

.attr,
.pair {
    display: flex;
    align-items: center;
    justify-content: space-between;
    width: 42px;
    font-size: 9px;
}

.pair {
    width: 28px;
    padding: 0 1px 0 2px;
}

.attr:disabled {
    color: #999;
}

.swatch {
    width: 11px;
    height: 11px;
    background: #d80000;
    border: 1px solid #a00;
}

/* menu */
.menu {
    display: flex;
    align-items: center;
    gap: 9px;
    height: 14px;
    padding-left: 10px;
    background: #f0f0f0;
}

.menu a {
    color: #111;
    text-decoration: none;
}

/* workspace */
.workspace {
    flex: 1;
    display: flex;
}

.side {
    width: 23px;
    background: #f0f0f0;
    border-right: 1px solid #aaa;
}

.side-tools {
    display: flex;
    flex-direction: column;
    padding-bottom: 6px;
    background: linear-gradient(to right, #fafafa, #dedede);
    border-bottom: 1px solid #ccc;
}

.side-tools button {
    display: flex;
    align-items: center;
    justify-content: center;
    width: 20px;
    height: 18px;
    margin-left: 1px;
}

.side-tools .more::after {
    clip-path: polygon(0 0, 100% 50%, 0 100%);
}

.side-tools hr {
    height: 1px;
    margin: 2px;
    border: none;
    background: #bbb;
}

.grip-h {
    height: 3px;
    margin: 1px 4px;
    border-top: 2px dotted #aaa;
}

.view {
    flex: 1;
    min-width: 0;
    display: flex;
    flex-direction: column;
}

.title {
    display: flex;
    align-items: center;
    gap: 7px;
    height: 21px;
    padding: 3px 1px 0 1px;
    border-top: 1px solid #50606e;
    background: linear-gradient(#96b3d1, #b4cde6);
}

.title > svg {
    width: 9px;
    height: 9px;
}

.title h1 {
    font-size: 8px;
    font-weight: normal;
    color: #223;
}

.window-buttons {
    display: flex;
    gap: 2px;
    margin-left: auto;
}

.window-buttons button {
    display: flex;
    align-items: center;
    justify-content: center;
    width: 21px;
    height: 12px;
    background: linear-gradient(#c2d6ea, #9db9d6);
    border: 1px solid #62788f;
    border-radius: 2px;
}

.window-buttons svg {
    width: 14px;
    height: 8px;
}

.window-buttons .close {
    background: linear-gradient(#d8847c, #b82c24);
    border-color: #6c2c30;
}

.view-tools {
    display: flex;
    align-items: center;
    height: 16px;
    padding-left: 1px;
    background: #f0f0f0;
}

.view-tools button {
    width: 15px;
    display: flex;
    justify-content: center;
}

.view-tools svg {
    width: 12px;
    height: 12px;
}

.view-tools .sep {
    margin: 0 2px 0 1px;
}

.view-tools .drop {
    width: 6px;
    margin: 0 2px;
}

.canvas {
    position: relative;
    flex: 1;
    overflow: hidden;
    background: #000;
}

#drawing {
    width: 100%;
    height: 100%;
}

/* floating palettes */
.palette {
    position: absolute;
    display: grid;
    grid-template-columns: 72px 14px 8px;
    align-content: center;
    align-items: center;
    column-gap: 12px;
    row-gap: 1px;
    width: 148px;
    height: 51px;
    padding: 0 15px 5px;
    background: #f0f0f0;
}

.palette-left {
    left: 20px;
    top: 67px;
}

.palette-right {
    right: 29px;
    top: 228px;
}

.modes {
    grid-column: 1;
    display: flex;
    height: 17px;
    border-top: 1px solid #bbb;
    border-left: 1px solid #ccc;
}

.modes button {
    width: 14px;
    height: 14px;
    display: flex;
    align-items: center;
    justify-content: center;
}

.modes svg {
    width: 11px;
    height: 11px;
}

.palette .drop {
    align-self: end;
}

/* parameter dialog */
.dialog {
    position: absolute;
    top: 49px;
    right: 0;
    width: 173px;
    display: grid;
    grid-template-columns: 71px 1fr;
    grid-template-rows: repeat(4, 13px) repeat(6, 14px) 20px;
    align-items: center;
    column-gap: 2px;
    padding: 3px 6px 5px 0;
    background: #f0f0f0;
}

.dialog label {
    text-align: right;
    white-space: nowrap;
    justify-self: end;
}

.dialog .off {
    color: #888;
}

.dialog .select {
    height: 11px;
    border: 1px solid #e2e2e2;
    border-radius: 2px;
}

.dialog .select.off {
    background: #f4f4f4;
}

.dialog .off::after {
    background: #777;
}

.dialog input {
    width: 65px;
    height: 12px;
    padding: 0 3px;
    background: #fff;
    border: 1px solid #b4b4b4;
}

.dialog input:disabled {
    background: #edf0f4;
    border-color: #aab4c0;
}

.dialog button {
    grid-column: 2;
    align-self: end;
    width: 43px;
    height: 14px;
    background: #fcfcfc;
    border: 1px solid #c4c4c4;
    border-radius: 2px;
}

/* bottom */
.bottom {
    display: flex;
    height: 24px;
    padding-top: 1px;
    background: #f0f0f0;
    border-bottom: 1px solid #bbb;
}

.views { width: 281px; }
.accudraw { width: 244px; }
.snaps { width: 217px; }
.modify { width: 213px; }

.bottom .pair {
    width: 25px;
    padding: 0;
}

.group-select {
    width: 85px;
    height: 12px;
    padding-left: 2px;
}

.group-select svg {
    width: 11px;
    height: 11px;
}

.numbers {
    display: flex;
}

.numbers button {
    width: 9px;
    height: 13px;
    font-size: 9px;
    font-weight: bold;
    border-right: 1px solid #333;
}

.numbers .active {
    border: 1px solid #b08c40;
}

.accudraw svg {
    width: 10px;
    height: 10px;
}

.accudraw label {
    font-size: 11px;
    font-weight: bold;
    color: #000;
}

.accudraw input {
    width: 61px;
    height: 13px;
    padding: 0 3px;
    color: #777;
    background: #fff;
    border: 1px solid #c8c8c8;
}

.dark {
    background: linear-gradient(#b89468, #d8b078);
}

.status {
    display: flex;
    align-items: center;
    height: 16px;
    background: #f0f0f0;
}

.status > span {
    display: flex;
    align-items: center;
    height: 13px;
}

.state {
    width: 265px;
    padding-left: 2px;
    border-right: 2px dotted #bbb;
}

.message {
    flex: 1;
    padding-left: 20px;
}

.cell {
    justify-content: center;
    width: 19px;
    border-left: 1px solid #bbb;
}

.cell.wide {
    justify-content: flex-start;
    width: 73px;
    padding-left: 1px;
}

.cell svg {
    width: 10px;
    height: 10px;
}
```
FILE: script.js
```
// Drawing coordinates are screen based, the view starts at 23,75
const drawing = document.getElementById('drawing');

let seed = 7;
function rnd(a, b) {
    seed = (seed * 16807) % 2147483647;
    return a + (seed / 2147483647) * (b - a);
}

// short horizontal and vertical wall strokes inside a box
function walls(x, y, w, h, count, max) {
    let d = '';
    for (let i = 0; i < count; i++) {
        const px = rnd(x, x + w).toFixed(1);
        const py = rnd(y, y + h).toFixed(1);
        const len = rnd(1, max).toFixed(1);
        d += `M${px} ${py}${rnd(0, 1) > 0.45 ? 'h' : 'v'}${len}`;
    }
    return d;
}

function path(d, color, width) {
    return `<path d="${d}" stroke="${color}" stroke-width="${width}"/>`;
}

function sheetContent() {
    let s = '';
    // frame marks
    s += '<path d="M2 17h44M60 14h370M500 17h404" stroke="#ccc" stroke-width=".8" stroke-dasharray="2 3 1 4 3 2"/>';
    s += '<path d="M54 2v62M132 16v50M208 16v50M276 16v50M343 16v50M410 16v50" stroke="#ccc" stroke-width=".6" stroke-dasharray="1 3"/>';
    s += path(walls(37, 0, 7, 9, 22, 5) + walls(40, 10, 5, 16, 12, 4), '#111', 1.3);
    s += path(walls(3, 42, 16, 23, 30, 6) + walls(22, 52, 10, 12, 12, 5) + walls(34, 44, 14, 20, 14, 6), '#666', 0.6);
    // floor plans
    [58, 142, 216, 286, 356].forEach(x => {
        s += path(walls(x, 17, 60, 46, 60, 9), '#888', 0.6);
        s += path(walls(x + 14, 22, 34, 34, 26, 6), '#333', 0.7);
        s += path(walls(x + 4, 22, 50, 34, 14, 9), '#555', 0.8);
        s += path(walls(x, 16, 64, 50, 80, 2), '#aaa', 0.6);
        s += path(walls(x, 62, 60, 3, 9, 8), '#888', 0.5);
    });
    // section
    s += path('M440 20h32M440 25h58M440 33h32M440 41h58M435 46h62M440 53h58M440 60h32M445 18v42', '#777', 0.6);
    s += path('M471 16v52', '#111', 1);
    s += path(walls(435, 16, 60, 48, 35, 5), '#777', 0.6);
    // elevations
    s += path('M515 47v19M526 47v19', '#555', 0.8);
    s += path(walls(518, 34, 60, 31, 70, 3) + walls(582, 34, 20, 32, 38, 4), '#888', 0.6);
    s += path(walls(603, 34, 66, 31, 40, 3), '#aaa', 0.6);
    s += path(walls(640, 38, 15, 22, 28, 5) + walls(665, 38, 10, 24, 22, 5), '#777', 0.6);
    s += path(walls(693, 32, 48, 32, 90, 5), '#777', 0.6);
    s += path(walls(750, 38, 38, 26, 26, 4) + walls(776, 38, 34, 26, 60, 5) + walls(822, 32, 40, 32, 80, 5), '#888', 0.6);
    s += path(walls(500, 20, 400, 44, 80, 2), '#bbb', 0.6);
    // trees
    [[629, 55], [754, 51], [768, 51]].forEach(([x, y]) => {
        s += `<circle cx="${x}" cy="${y}" r="4.500" stroke="#555" stroke-width="2" stroke-dasharray="1 1"/>`;
        s += path(walls(x - 4, y - 4, 7, 7, 22, 3), '#444', 0.8);
    });
    s += path(walls(888, 48, 6, 10, 20, 3), '#333', 0.8);
    return s;
}

function room(x, y) {
    return `<path d="M${x - 3} ${y - 3}h7v7h-7z" fill="#fff" stroke="#20188c" stroke-width="1.300"/>` +
        `<path d="M${x - 3} ${y + 4}h7v-4" stroke="#f59a28"/>` +
        `<path d="M${x} ${y}h2v2h-2z" fill="#111"/>`;
}

function rooms(list) {
    return list.map(([x, y]) => room(x, y)).join('');
}

const typical = `
    <path d="M573 165l-5 5v8l4 6M616 160l3 5-1 6M584 153h10M575 184h8M592 184h8" stroke="#d010b0" stroke-width="3"/>
    <path d="M572 156h8v-2h18l2-6h8l3 9 4 5v7l5 4-1 8-5 3h-9l-4 2h-22l-4-3h-4l-3-5 2-6z" fill="#fff" stroke="#f59a28" stroke-width="2"/>
    <path d="M574 163h20M578 174h32M584 156v24M592 156v24M600 150v30M607 162v14M594 165h18" stroke="#2a1890" stroke-width="1.500"/>
    <path d="M580 160v22M588 162v20M596 156v12M604 152v26M576 168h36" stroke="#ec8c28" stroke-width="1.500"/>
    ${rooms([[576, 158], [587, 157], [594, 157], [606, 152], [610, 164], [575, 168], [601, 168], [573, 177], [583, 178], [591, 179], [598, 176], [607, 176], [614, 172]])}
    <path d="M582 163h5v4h-5zM590 162h5v5h-5zM603 155h4v5h-4z" fill="#e06818" stroke="#a05030"/>
    <path d="M580 151h3v6h-3zM599 144h3v8h-3zM585 184h3v6h-3zM601 183h3v6h-3z" fill="#d41020"/>`;

const basement = `
    <path d="M561 260l-3 5 2 3M577 276v6h12" stroke="#c010b0" stroke-width="2"/>
    <path d="M573 255h11v-7h7v11l6 4-1 5-4 2v9h-16v-9l-6-3h-7v-6h7z" fill="#fff" stroke="#f59a28" stroke-width="1.500"/>
    <path d="M571 257h12v9h-12zM583 259h6v8h-6z" fill="#d88030"/>
    <path d="M568 263h20M574 259h14M584 256v22" stroke="#503080" stroke-width="1.200"/>
    ${rooms([[587, 250], [565, 264], [574, 264], [580, 271], [588, 271]])}
    <path d="M590 259h4v7h-4z" fill="#708050"/>
    <path d="M577 250h3v5h-3zM583 279h3v6h-3zM595 265h5v3h-5z" fill="#d41020"/>`;

drawing.innerHTML = `
<defs><g id="sheet">${sheetContent()}</g></defs>
<g transform="translate(-23 -75)">
    <path d="M277 36L1179 32V101L277 105z" fill="#fff"/>
    <use href="#sheet" transform="translate(277 35)"/>
    <path d="M207 127L1107 123V191L208 195z" fill="#fff"/>
    <use href="#sheet" transform="translate(207 126)"/>
    <path d="M119 220L1026 219V288H119z" fill="#fff"/>
    <use href="#sheet" transform="translate(119 220)"/>

    <g transform="translate(-5 -90)">${typical}</g>
    ${typical}
    ${basement}

    <g stroke="#58e89c" stroke-width="2">
        <path d="M551 49h71v58h-71z"/>
        <path d="M557 140h71v57h-71z"/>
        <path d="M546 235h72v57h-72z"/>
        <path d="M546 368h72v58h-72z"/>
    </g>

    <path d="M559 382h24l2-3h5l2-3h11v4h3l2 9h2v5h1v12h-19v3h-7l-1 2h-27v-12h1v-13z" stroke="#c81020" stroke-width="2"/>
    <circle cx="578" cy="394" r="2" fill="#f4f040"/>
    <circle cx="583" cy="397" r="2" fill="#c87850"/>

    <circle cx="799" cy="265" r="3" fill="#a8a8d8"/>
    <path d="M799 264v11l2-2 2 4 2-1-2-4h3z" fill="#fff" stroke="#444"/>
</g>`;
```
